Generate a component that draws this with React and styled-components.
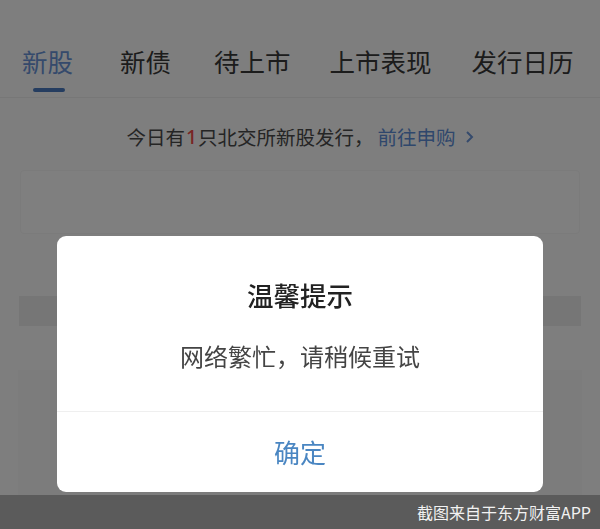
import React from "react";
import styled, {createGlobalStyle} from "styled-components";

const GlobalStyle = createGlobalStyle`
    html, body {
        margin: 0;
        padding: 0;
        height: 100%;
        background: #fdfdfd;
        font-family: "Noto Sans CJK SC", "Noto Sans", sans-serif;
    }
`;

const Page = styled.div`
    width: 600px;
    height: 529px;
    overflow: hidden;
    background: #fdfdfd;
    display: flex;
    flex-direction: column;
`;

const TabBar = styled.div`
    display: flex;
    padding: 46px 0 0 22px;
    height: 51px;
    border-bottom: 1px solid #eeeeee;
`;

const Tab = styled.div`
    display: flex;
    flex-direction: column;
    align-items: center;
    margin-left: ${(p) => p.gap}px;
    font-size: 25.5px;
    line-height: 30px;
    color: ${(p) => (p.active ? "#6a94d8" : "#393939")};
`;

const Underline = styled.div`
    width: 32px;
    height: 4px;
    border-radius: 2px;
    margin-top: 12px;
    margin-left: 3px;
    background: #4a7ac0;
`;

const Notice = styled.div`
    padding: 27px 0 21px;
    display: flex;
    justify-content: center;
    align-items: center;
    font-size: 19.5px;
    line-height: 24px;
    color: #4a4a4a;
`;

const Red = styled.span`
    color: #f24a4a;
    font-family: "Noto Sans", sans-serif;
    font-weight: 500;
    margin: 0 1px;
`;

const Link = styled.span`
    margin-left: 4px;
    color: #5e8fd8;
`;

const Chevron = styled.svg`
    margin-left: 9px;
    width: 9px;
    height: 14px;
`;

const Block = styled.div`
    margin: 0 20px;
    height: 62px;
    background: #ffffff;
    border: 1px solid #f6f6f6;
    border-radius: 4px;
`;

const Band = styled.div`
    margin: 62px 19px 0;
    height: 30px;
    background: #ececec;
`;

const Rows = styled.div`
    flex: 1;
    margin: 44px 18px 0;
    background: #f9f9f9;
`;

const Mask = styled.div`
    position: fixed;
    inset: 0;
    background: rgba(0, 0, 0, 0.5);
    display: flex;
    justify-content: center;
    align-items: flex-start;
    padding-top: 236px;
`;

const Dialog = styled.div`
    width: 486px;
    height: 256px;
    background: #ffffff;
    border-radius: 9px;
    display: flex;
    flex-direction: column;
    align-items: center;
    overflow: hidden;
`;

const Title = styled.div`
    margin-top: 44px;
    font-size: 26.5px;
    line-height: 30px;
    font-weight: 500;
    color: #222222;
`;

const Message = styled.div`
    margin-top: 32px;
    font-size: 24px;
    line-height: 28px;
    color: #444444;
`;

const Footer = styled.div`
    margin-top: auto;
    width: 100%;
    height: 80px;
    border-top: 1px solid #efefef;
    display: flex;
    align-items: center;
    justify-content: center;
`;

const Confirm = styled.button`
    border: none;
    background: none;
    padding: 0;
    font-family: inherit;
    font-size: 26px;
    line-height: 30px;
    color: #4a86c2;
    cursor: pointer;
`;

const Watermark = styled.div`
    position: fixed;
    left: 0;
    right: 0;
    bottom: 0;
    height: 34px;
    background: #5b5b5b;
    display: flex;
    align-items: center;
    justify-content: flex-end;
    padding-right: 9px;
    font-size: 16px;
    color: #f2f2f2;
`;

const tabs = [
    {label: "新股", gap: 0},
    {label: "新债", gap: 47},
    {label: "待上市", gap: 43},
    {label: "上市表现", gap: 39},
    {label: "发行日历", gap: 40},
];

const App = () => {
    return (
        <>
            <GlobalStyle />
            <Page>
                <TabBar>
                    {tabs.map((t, i) => (
                        <Tab key={t.label} gap={t.gap} active={i === 0}>
                            {t.label}
                            {i === 0 && <Underline />}
                        </Tab>
                    ))}
                </TabBar>
                <Notice>
                    今日有<Red>1</Red>只北交所新股发行，<Link>前往申购</Link>
                    <Chevron viewBox="0 0 9 14">
                        <path d="M2 2 L7 7 L2 12" fill="none" stroke="#6a94d8" strokeWidth="2" />
                    </Chevron>
                </Notice>
                <Block />
                <Band />
                <Rows />
            </Page>
            <Mask>
                <Dialog>
                    <Title>温馨提示</Title>
                    <Message>网络繁忙，请稍候重试</Message>
                    <Footer>
                        <Confirm>确定</Confirm>
                    </Footer>
                </Dialog>
            </Mask>
            <Watermark>截图来自于东方财富APP</Watermark>
        </>
    );
};

export default App;
